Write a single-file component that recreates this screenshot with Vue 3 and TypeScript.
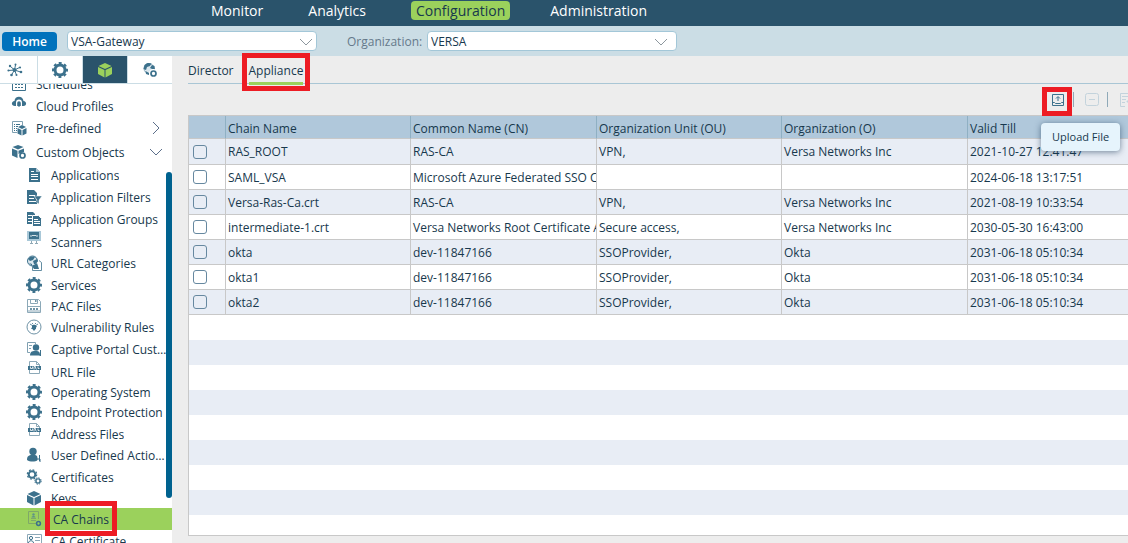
<script setup lang="ts">
import { ref } from 'vue'

interface NavEntry { label: string; active?: boolean }
interface TreeEntry {
  label: string
  icon: string
  size?: 'short' | 'tall'
  raised?: boolean
  level: 1 | 2
  arrow?: 'right' | 'down'
  active?: boolean
}
interface Chain { name: string; cn: string; ou: string; org: string; till: string }

const nav: NavEntry[] = [
  { label: 'Monitor' },
  { label: 'Analytics' },
  { label: 'Configuration', active: true },
  { label: 'Administration' },
]

const modules = [
  { icon: 'network', label: 'Networking' },
  { icon: 'gear', label: 'Services' },
  { icon: 'cube', label: 'Objects', active: true },
  { icon: 'globegear', label: 'Others' },
]

const tree: TreeEntry[] = [
  { label: 'Schedules', icon: 'calendar', level: 1, size: 'short' },
  { label: 'Cloud Profiles', icon: 'cloud', level: 1, raised: true },
  { label: 'Pre-defined', icon: 'listcube', level: 1, size: 'tall', arrow: 'right' },
  { label: 'Custom Objects', icon: 'cubegear', level: 1, size: 'tall', arrow: 'down' },
  { label: 'Applications', icon: 'doc', level: 2 },
  { label: 'Application Filters', icon: 'docfilter', level: 2 },
  { label: 'Application Groups', icon: 'docs', level: 2 },
  { label: 'Scanners', icon: 'monitor', level: 2, raised: true },
  { label: 'URL Categories', icon: 'globedoc', level: 2 },
  { label: 'Services', icon: 'gear', level: 2 },
  { label: 'PAC Files', icon: 'floppy', level: 2, size: 'short' },
  { label: 'Vulnerability Rules', icon: 'bug', level: 2 },
  { label: 'Captive Portal Custom Pages', icon: 'portal', level: 2 },
  { label: 'URL File', icon: 'urlfile', level: 2, raised: true },
  { label: 'Operating System', icon: 'gear', level: 2, size: 'short' },
  { label: 'Endpoint Protection', icon: 'gear', level: 2, size: 'short' },
  { label: 'Address Files', icon: 'urlfile', level: 2, raised: true },
  { label: 'User Defined Actions', icon: 'user', level: 2 },
  { label: 'Certificates', icon: 'gears', level: 2 },
  { label: 'Keys', icon: 'cube', level: 2, size: 'short' },
  { label: 'CA Chains', icon: 'cert', level: 2, active: true },
  { label: 'CA Certificate', icon: 'card', level: 2 },
]

const chains: Chain[] = [
  { name: 'RAS_ROOT', cn: 'RAS-CA', ou: 'VPN,', org: 'Versa Networks Inc', till: '2021-10-27 12:41:47' },
  { name: 'SAML_VSA', cn: 'Microsoft Azure Federated SSO Certificate', ou: '', org: '', till: '2024-06-18 13:17:51' },
  { name: 'Versa-Ras-Ca.crt', cn: 'RAS-CA', ou: 'VPN,', org: 'Versa Networks Inc', till: '2021-08-19 10:33:54' },
  { name: 'intermediate-1.crt', cn: 'Versa Networks Root Certificate Authority', ou: 'Secure access,', org: 'Versa Networks Inc', till: '2030-05-30 16:43:00' },
  { name: 'okta', cn: 'dev-11847166', ou: 'SSOProvider,', org: 'Okta', till: '2031-06-18 05:10:34' },
  { name: 'okta1', cn: 'dev-11847166', ou: 'SSOProvider,', org: 'Okta', till: '2031-06-18 05:10:34' },
  { name: 'okta2', cn: 'dev-11847166', ou: 'SSOProvider,', org: 'Okta', till: '2031-06-18 05:10:34' },
]

const columns = ['Chain Name', 'Common Name (CN)', 'Organization Unit (OU)', 'Organization (O)', 'Valid Till']

const appliance = ref('VSA-Gateway')
const organization = ref('VERSA')
const selected = ref<string[]>([])
</script>

<template>
  <div class="app">
    <svg class="sprite" aria-hidden="true">
      <symbol id="gear" viewBox="0 0 16 16">
        <circle cx="8" cy="8" r="5" fill="none" stroke="currentColor" stroke-width="3" />
        <circle cx="8" cy="8" r="6.9" fill="none" stroke="currentColor" stroke-width="2.200" stroke-dasharray="2.900 2.519" stroke-dashoffset="1.450" />
      </symbol>
      <symbol id="cube" viewBox="0 0 16 16">
        <path fill="currentColor" d="M8 1l6.500 3L8 7 1.500 4zM1 5l6.500 3v7.500L1 12zM15 5L8.500 8v7.500L15 12z" />
      </symbol>
      <symbol id="network" viewBox="0 0 16 16">
        <path stroke="currentColor" fill="none" d="M7.500 8L3 4M7.500 8l1-5M7.500 8l5-2.500M7.500 8l6 2M7.500 8l2 5M7.500 8l-3 5M7.500 8L1.500 8.500" />
        <g fill="currentColor"><circle cx="7.500" cy="8" r="2" /><circle cx="3" cy="4" r="1.200" /><circle cx="8.500" cy="2.500" r="1" /><circle cx="13" cy="5.500" r="1.100" /><circle cx="14" cy="10" r="1.300" /><circle cx="9.500" cy="13" r="1" /><circle cx="4.500" cy="13" r="1.300" /><circle cx="1.500" cy="8.500" r="1.100" /></g>
      </symbol>
      <symbol id="globegear" viewBox="0 0 16 16">
        <circle cx="7" cy="6.500" r="5" fill="#dbe7ee" stroke="#8fafc0" />
        <path fill="currentColor" d="M2.500 3c2-2.500 5-2.500 7-1.500L8 4 5 5 4 8 1.500 7zM10 3l2.500 1 .5 4-3-1-2-1zM3.500 9l3.500 2v2l-3-1z" />
        <circle cx="11.500" cy="11.500" r="2.500" fill="#fff" stroke="#fff" stroke-width="4" />
        <circle cx="11.500" cy="11.500" r="2.500" fill="#fff" stroke="currentColor" stroke-width="1.700" />
      </symbol>
      <symbol id="calendar" viewBox="0 0 16 16">
        <path fill="none" stroke="currentColor" d="M1.500 3.500h13v11h-13z" />
        <path fill="currentColor" d="M1 3h14v3H1zM4 8h2v1H4zM7 8h2v1H7zM10 8h2v1h-2zM4 11h2v1H4zM7 11h2v1H7zM10 11h2v1h-2z" />
      </symbol>
      <symbol id="cloud" viewBox="0 0 16 16">
        <path fill="currentColor" d="M4 12C0 12 0 7.500 3.500 7 3.500 1.500 12 1 12.500 7c3.500.5 3.500 5 0 5z" />
        <path fill="#fff" d="M5 13V8.500a3 3 0 016 0V13h-1.200V9a1.800 1.800 0 00-3.600 0v4z" /><path fill="currentColor" d="M7.500 8.500h1V13h-1z" />
      </symbol>
      <symbol id="listcube" viewBox="0 0 16 16">
        <path fill="none" stroke="#7fa0b1" d="M6 12.500H1.500v-11h10V5" /><path stroke="currentColor" stroke-dasharray="1 1 5" d="M3 4.500h6M3 6.500h4M3 8.500h3M3 10.500h3" />
        <path fill="currentColor" d="M11 5l4 2-4 2-4-2zM6.500 8l4 2v5.500l-4-2zM15.500 8l-4 2v5.500l4-2z" />
      </symbol>
      <symbol id="cubegear" viewBox="0 0 16 16">
        <path fill="currentColor" d="M7 1l5.500 2L7 5.500 1.500 3zM1 4.500l5.500 2.300V14L1 11.500zM13 4.500L7.500 6.800V10l5.500-2z" />
        <circle cx="11.500" cy="11.500" r="2.500" fill="#fff" stroke="currentColor" stroke-width="1.700" />
      </symbol>
      <symbol id="doc" viewBox="0 0 16 16">
        <path fill="currentColor" d="M3 1h7l4 4v10H3z" /><path stroke="#fff" d="M5 4.500h3M5 7.500h7M5 9.500h7M5 12.500h7" /><path fill="#a9c3d1" d="M10 1l4 4h-4z" />
      </symbol>
      <symbol id="docfilter" viewBox="0 0 16 16">
        <path fill="currentColor" d="M1 1h7l3 3v4H9l2 4v3H1z" /><path stroke="#fff" d="M3 6.500h6M3 9.500h5M3 12.500h7" /><path fill="currentColor" stroke="#fff" stroke-width=".5" d="M8 7h8l-3 4v4l-2-1v-3z" />
      </symbol>
      <symbol id="docs" viewBox="0 0 16 16">
        <path fill="currentColor" d="M1 1h6l2 2v10H1z" /><path stroke="#fff" d="M2 4.500h4M2 7.500h4M2 10.500h4" />
        <path fill="currentColor" stroke="#fff" d="M6.500 4.500h6l3 3v8h-9z" /><path stroke="#fff" d="M8 8.500h4M8 10.500h6M8 12.500h6" />
      </symbol>
      <symbol id="monitor" viewBox="0 0 16 16">
        <path fill="#a9c8d8" d="M1 1h14v10H1z" /><path fill="currentColor" d="M3 2h10v7H3z" /><path fill="none" stroke="#fff" stroke-width=".8" d="M4 6h2l1-1 1 1 1-1 1 1h2" /><path stroke="#8fa9b6" d="M5.500 11v2M10.500 11v2M4 13.500h3M9 13.500h3" />
      </symbol>
      <symbol id="globedoc" viewBox="0 0 16 16">
        <circle cx="6.500" cy="6" r="5" fill="#dbe7ee" stroke="currentColor" /><path fill="currentColor" d="M2 4c2-3 5-3 7-2L7 5 4 6zM7 6l4-2v5H8zM3 8l3 1v2z" />
        <path fill="#fff" stroke="currentColor" stroke-width=".8" d="M13 5.500l2.500 2v8H6.500V12" /><path fill="currentColor" d="M6 11l5-3 2 6H8z" />
      </symbol>
      <symbol id="floppy" viewBox="0 0 16 16">
        <path fill="none" stroke="#8ca9b8" d="M1.500 1.500h11l2 2v11h-13zM4.500 1.500v4h7v-4M1.500 8.500h13M1.500 13h13" /><path fill="#6f93a6" d="M9 2h1.500v2H9zM4 10h2v2H4zM7 10h2v2H7zM10 10h2v2h-2z" />
      </symbol>
      <symbol id="bug" viewBox="0 0 16 16">
        <circle cx="8" cy="8" r="7" fill="none" stroke="#6f93a6" /><path fill="currentColor" d="M6 6.500l2-1 2 1v3L8 12 6 9.500z" /><path fill="none" stroke="currentColor" stroke-width=".8" d="M4 5l3 2M12 5L9 7M5 9.500l6-2M6 4l1 1M10 4L9 5" />
      </symbol>
      <symbol id="portal" viewBox="0 0 16 16">
        <path fill="none" stroke="#7fa0b1" d="M4 11.500H1.500v-10h8V3M3 4.500h3M3 7.500h2" /><circle cx="10" cy="6.500" r="3.200" fill="currentColor" /><path fill="currentColor" d="M4 14.500C4 10 7 10 10 10s4 1 4 4.500z" /><path stroke="currentColor" d="M14.500 9v6M13 13l1.500 2" />
      </symbol>
      <symbol id="urlfile" viewBox="0 0 16 16">
        <path fill="none" stroke="#8ca9b8" d="M3.500 6V1.500h7l3 3v9h-10V10M10.500 1.500v3h3" /><path fill="currentColor" d="M2 6h13v4H2z" /><path fill="none" stroke="#fff" stroke-width=".8" d="M4.500 6.500v2h2v-2M8 9.500v-3h1.500v1.500l1 1.500M12 6.500v2h1.500" />
      </symbol>
      <symbol id="user" viewBox="0 0 16 16">
        <circle cx="7" cy="4.500" r="3.700" fill="currentColor" /><path fill="currentColor" d="M1 13c0-5 3-5 6-5s5 0 5 5c-3 2-8 2-11 0z" /><path stroke="#fff" stroke-width="3" d="M13 7v8" /><path fill="none" stroke="currentColor" d="M13.500 8v6M11 12h3v3" />
      </symbol>
      <symbol id="gears" viewBox="0 0 16 16">
        <circle cx="6" cy="5.500" r="3.300" fill="none" stroke="currentColor" stroke-width="2" /><circle cx="6" cy="5.500" r="4.700" fill="none" stroke="currentColor" stroke-width="1.200" stroke-dasharray="1.900 1.790" />
        <circle cx="12" cy="12" r="2.100" fill="none" stroke="currentColor" stroke-width="1.400" /><circle cx="12" cy="12" r="3.200" fill="none" stroke="currentColor" stroke-dasharray="1.400 1.110" />
      </symbol>
      <symbol id="cert" viewBox="0 0 16 16">
        <path fill="none" stroke="#7fa868" d="M10 12.500H2.500v-12h10V8M5 7.500h5M5 9.500h5" /><circle cx="7.500" cy="3.500" r="1.200" fill="#5f9488" /><path fill="#5f9488" d="M5.500 6.500c0-2 4-2 4 0z" /><circle cx="12.500" cy="12.500" r="1.900" fill="none" stroke="#3c718c" stroke-width="1.500" />
      </symbol>
      <symbol id="card" viewBox="0 0 16 16">
        <path fill="none" stroke="#8ca9b8" d="M1.500 1.500h14v11h-14zM9 4.500h5M9 7.500h5" /><circle cx="5" cy="5" r="1.600" fill="none" stroke="currentColor" /><path fill="none" stroke="currentColor" d="M2.500 10c0-3 5-3 5 0" />
      </symbol>
    </svg>

    <header class="topbar">
      <nav class="nav">
        <a v-for="item in nav" :key="item.label" href="#" class="nav-link" :class="{ active: item.active }">{{ item.label }}</a>
      </nav>
    </header>

    <div class="context">
      <button type="button" class="home">Home</button>
      <span class="picker">
        <select v-model="appliance" aria-label="Appliance">
          <option>VSA-Gateway</option>
        </select>
        <svg class="chevron" viewBox="0 0 14 8"><path d="M1 1l6 6 6-6" /></svg>
      </span>
      <label class="org-label" for="organization">Organization:</label>
      <span class="picker picker-org">
        <select id="organization" v-model="organization">
          <option>VERSA</option>
        </select>
        <svg class="chevron" viewBox="0 0 14 8"><path d="M1 1l6 6 6-6" /></svg>
      </span>
    </div>

    <div class="body">
      <aside class="sidebar">
        <div class="modules">
          <button v-for="m in modules" :key="m.icon" type="button" class="module" :class="{ active: m.active }" :aria-label="m.label">
            <svg class="icon"><use :href="'#' + m.icon" /></svg>
          </button>
        </div>
        <div class="tree-view">
          <ul class="tree">
            <li v-for="item in tree" :key="item.label">
              <a
                href="#"
                class="tree-link"
                :class="['level-' + item.level, item.size, { active: item.active, raised: item.raised }]"
              >
                <svg class="icon"><use :href="'#' + item.icon" /></svg>
                <span class="tree-label">{{ item.label }}</span>
                <svg v-if="item.arrow" class="arrow" :class="item.arrow" viewBox="0 0 14 8"><path d="M1 1l6 6 6-6" /></svg>
                <span v-if="item.active" class="callout callout-tree"></span>
              </a>
            </li>
          </ul>
          <div class="scroll-thumb"></div>
        </div>
      </aside>

      <main class="main">
        <div class="tabs">
          <a href="#" class="tab">Director</a>
          <a href="#" class="tab active">Appliance<span class="callout callout-tab"></span></a>
        </div>

        <div class="toolbar">
          <button type="button" class="tool" aria-label="Upload File">
            <svg viewBox="0 0 14 14"><path d="M1.500 1.500h11v11h-11zM1.500 9.500h2l1 1h5l1-1h2M7 8V4M5 5.500l2-2 2 2" /></svg>
            <span class="callout callout-tool"></span>
            <span class="tooltip" role="tooltip">Upload File</span>
          </button>
          <span class="divider"></span>
          <button type="button" class="tool" aria-label="Delete" disabled>
            <svg viewBox="0 0 14 14"><rect x=".5" y=".5" width="13" height="12" rx="2" /><path d="M4 6.500h6" /></svg>
          </button>
          <span class="divider"></span>
          <button type="button" class="tool" aria-label="Export" disabled>
            <svg viewBox="0 0 14 14"><path d="M13 .5H1.500v13H6M3 3.500h7M3 6.500h4M3 9.500h3M8 8.500h6M8 8.500l2-2M8 8.500l2 2" /></svg>
          </button>
        </div>

        <section class="grid">
          <table>
            <colgroup>
              <col class="col-check"><col class="col-a"><col class="col-b"><col class="col-a"><col class="col-b"><col>
            </colgroup>
            <thead>
              <tr>
                <th></th>
                <th v-for="c in columns" :key="c" scope="col">{{ c }}</th>
              </tr>
            </thead>
            <tbody>
              <tr v-for="row in chains" :key="row.name">
                <td class="check"><input v-model="selected" type="checkbox" :value="row.name" :aria-label="row.name"></td>
                <td>{{ row.name }}</td>
                <td>{{ row.cn }}</td>
                <td>{{ row.ou }}</td>
                <td>{{ row.org }}</td>
                <td>{{ row.till }}</td>
              </tr>
            </tbody>
          </table>
          <div class="stripes"></div>
        </section>
      </main>
    </div>
  </div>
</template>

<style>
body {
  background: #ededed;
}
</style>

<style scoped>
.app {
  display: flex;
  flex-direction: column;
  height: 100vh;
  overflow: hidden;
  font-family: "Open Sans", "Noto Sans", sans-serif;
  font-size: 12px;
  color: #17384d;
}
.app * {
  box-sizing: border-box;
}
.app a {
  color: inherit;
  text-decoration: none;
}
.app button,
.app select {
  margin: 0;
  font-family: inherit;
}
.sprite {
  position: absolute;
  width: 0;
  height: 0;
}
.icon {
  width: 16px;
  height: 16px;
  flex: none;
  color: #3c718c;
}

.topbar {
  flex: none;
  height: 26px;
  background: #2a536b;
}
.nav {
  display: flex;
  gap: 35px;
  padding: 1px 0 0 206px;
}
.nav-link {
  padding: 0 5px;
  border-radius: 4px;
  font-size: 14px;
  line-height: 19px;
}
.app .nav-link {
  color: #fff;
}
.app .nav-link.active {
  margin-left: 5px;
  background: #9bd15c;
  color: #17384d;
}

.context {
  flex: none;
  display: flex;
  align-items: center;
  height: 30px;
  padding: 0 2px;
  background: #cbdde5;
}
.home {
  width: 55px;
  height: 19px;
  padding: 0;
  border: 0;
  border-radius: 4px;
  background: #0072bc;
  color: #fff;
  font-size: 12px;
  font-weight: 600;
  line-height: 19px;
}
.app .home {
  margin-right: 10px;
}
.picker {
  position: relative;
  width: 250px;
}
.picker select {
  display: block;
  width: 100%;
  height: 20px;
  padding: 0 0 0 3px;
  border: 1px solid #a3c7d8;
  border-radius: 4px;
  background: #fff;
  color: #17384d;
  font-size: 12px;
  appearance: none;
}
.chevron {
  position: absolute;
  top: 7px;
  right: 4px;
  width: 14px;
  height: 8px;
  fill: none;
  stroke: #8d979e;
  pointer-events: none;
}
.picker-org .chevron {
  right: 9px;
}
.org-label {
  width: 80px;
  margin-left: 30px;
  color: #65798a;
}

.body {
  flex: 1;
  display: flex;
  min-height: 0;
}
.sidebar {
  flex: none;
  display: flex;
  flex-direction: column;
  width: 172px;
  background: #fff;
}
.modules {
  flex: none;
  display: flex;
  justify-content: flex-end;
  height: 28px;
  overflow: hidden;
  border-bottom: 1px solid #cbdde5;
}
.module {
  flex: none;
  display: flex;
  align-items: center;
  justify-content: center;
  width: 45px;
  padding: 0;
  border: 0;
  border-left: 1px solid #cbdde5;
  background: #fff;
}
.module.active {
  background: #2a536b;
}
.module.active .icon {
  color: #9bd15c;
}
.tree-view {
  position: relative;
  flex: 1;
  min-height: 0;
  overflow: hidden;
}
.tree {
  margin: -10px 0 0;
  padding: 0;
  list-style: none;
}
.tree-link {
  position: relative;
  display: flex;
  align-items: center;
  height: 22px;
  padding: 0 4px 0 26px;
}
.tree-link.level-1 {
  padding-left: 11px;
}
.tree-link.short {
  height: 20px;
}
.tree-link.tall {
  height: 24px;
}
.tree-link.active {
  background: #9bd15c;
}
.tree-link.raised .icon {
  align-self: flex-start;
}
.tree-label {
  margin-left: 9px;
  overflow: hidden;
  white-space: nowrap;
  text-overflow: ellipsis;
}
.raised .tree-label {
  padding-top: 3px;
}
.active .tree-label {
  margin-left: 11px;
}
.arrow {
  width: 14px;
  height: 8px;
  flex: none;
  margin-left: auto;
  margin-right: 5px;
  fill: none;
  stroke: #5c6f8a;
}
.arrow.right {
  transform: rotate(-90deg);
}
.scroll-thumb {
  position: absolute;
  top: 88px;
  right: 0;
  width: 6px;
  height: 326px;
  border-radius: 3px;
  background: #00628f;
}

.callout {
  position: absolute;
  z-index: 2;
  border: 5px solid #ed1c24;
  pointer-events: none;
}
.callout-tree {
  inset: -7px 55px -6px 45px;
}
.callout-tab {
  inset: -3px -7px -9px -7px;
}
.callout-tool {
  inset: -5px -6px -8px -8px;
}

.main {
  flex: 1;
  display: flex;
  flex-direction: column;
  min-width: 0;
  padding: 0 0 7px 16px;
}
.tabs {
  flex: none;
  display: flex;
  gap: 15px;
  height: 28px;
  border-bottom: 1px solid #a9c6d5;
}
.tab {
  position: relative;
  height: 29px;
  line-height: 29px;
}
.tab.active {
  border-bottom: 3px solid #9bd15c;
}
.toolbar {
  flex: none;
  display: flex;
  align-items: center;
  justify-content: flex-end;
  gap: 7px;
  height: 31px;
  margin-right: -6px;
}
.tool {
  position: relative;
  width: 16px;
  height: 16px;
  padding: 1px;
  border: 0;
  background: none;
}
.tool svg {
  display: block;
  width: 14px;
  height: 14px;
  fill: none;
  stroke: #3c718c;
}
.tool:disabled svg {
  stroke: #c3d3dc;
}
.divider {
  width: 1px;
  height: 15px;
  background: #8fa9b8;
}
.app .divider {
  margin-right: 3px;
}
.tooltip {
  position: absolute;
  z-index: 3;
  top: 31px;
  left: -9px;
  padding: 0 11px;
  border-radius: 4px;
  background: #e6f4fc;
  box-shadow: 0 1px 6px rgba(30, 60, 90, 0.6);
  color: #17384d;
  font-size: 11px;
  font-weight: 500;
  line-height: 28px;
  white-space: nowrap;
}

.grid {
  flex: 1;
  display: flex;
  flex-direction: column;
  min-height: 0;
  border: 1px solid #c8c8c8;
  border-right: 0;
  background: #fff;
}
table {
  width: 100%;
  table-layout: fixed;
  border-collapse: separate;
  border-spacing: 0;
}
.col-check {
  width: 37px;
}
.col-a {
  width: 185px;
}
.col-b {
  width: 186px;
}
th,
td {
  height: 25px;
  padding: 2px 0 0 2px;
  border-right: 1px solid #c8c8c8;
  border-bottom: 1px solid #c8c8c8;
  font-weight: 400;
  line-height: 22px;
  text-align: left;
  vertical-align: top;
  white-space: nowrap;
  overflow: hidden;
}
th {
  height: 23px;
  padding-top: 3px;
  border-right-color: #8fb0c3;
  background: #b0c8db;
  line-height: 19px;
}
th:last-child,
td:last-child {
  border-right: 0;
}
tbody tr:nth-child(odd) td {
  background: #e8edf5;
}
tbody tr:first-child td {
  height: 26px;
}
.check {
  padding: 0 0 0 4px;
  vertical-align: middle;
}
.check input {
  display: block;
  width: 14px;
  height: 14px;
  margin: 0;
  border: 1px solid #6688a0;
  border-radius: 3px;
  appearance: none;
}
.check input:checked {
  background: #0072bc;
}
.stripes {
  flex: 1;
  background: repeating-linear-gradient(#fff 0 25px, #e8edf5 25px 50px);
}
</style>
